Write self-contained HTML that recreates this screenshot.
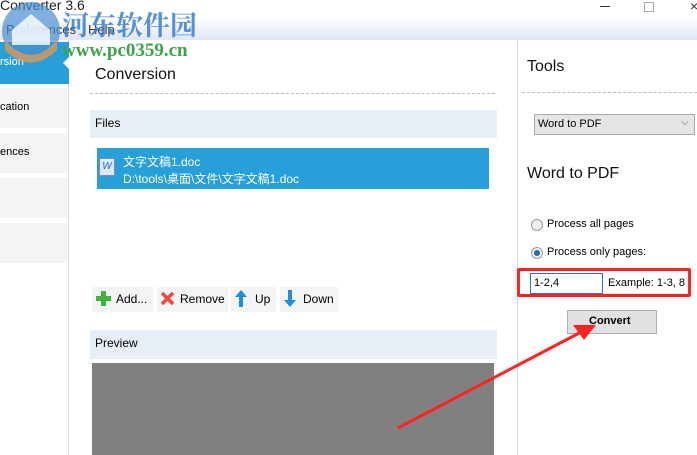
<!DOCTYPE html>
<html><head><meta charset="utf-8"><style>
*{margin:0;padding:0;box-sizing:border-box}
body{width:697px;height:455px;overflow:hidden;background:#fff;font-family:"Liberation Sans","Noto Sans CJK SC",sans-serif;font-size:12px;color:#000;position:relative}
.a{position:absolute}
.r{font-size:11px}
</style></head><body>
<div class="a" style="left:0;top:0;width:697px;height:20px;background:#fff"></div>
<div class="a" style="left:0;top:-3px;font-size:14px;color:#222">Converter 3.6</div>
<div class="a" style="left:600px;top:6px;width:10px;height:1px;background:#333"></div>
<div class="a" style="left:644px;top:2px;width:10px;height:10px;border:1px solid #aaa"></div>
<div class="a" style="left:690px;top:-2px;font-size:14px;color:#333">×</div>
<div class="a" style="left:0;top:20px;width:697px;height:20px;background:linear-gradient(#fbfcff,#dfe6f3)"></div>
<div class="a" style="left:6px;top:22px;font-size:13px;color:#333">Preferences</div>
<div class="a" style="left:88px;top:22px;font-size:13px;color:#333">Help</div>
<!-- sidebar -->
<div class="a" style="left:0;top:40px;width:69px;height:415px;background:#fff;border-right:1px solid #ddd"></div>
<div class="a" style="left:0;top:42px;width:69px;height:42px;background:#279fd9"></div>
<div class="a" style="left:0;top:56px;color:#fff;font-size:11px">rsion</div>
<div class="a" style="left:63px;top:57px;width:0;height:0;border-top:6px solid transparent;border-bottom:6px solid transparent;border-right:6px solid #fff"></div>
<div class="a" style="left:0;top:88px;width:68px;height:40px;background:#f3f4f6"></div>
<div class="a" style="left:0;top:101px;font-size:11px">cation</div>
<div class="a" style="left:0;top:133px;width:68px;height:40px;background:#f3f4f6"></div>
<div class="a" style="left:0;top:146px;font-size:11px">ences</div>
<div class="a" style="left:0;top:178px;width:68px;height:40px;background:#f3f4f6"></div>
<div class="a" style="left:0;top:223px;width:68px;height:40px;background:#f3f4f6"></div>
<!-- main -->
<div class="a" style="left:95px;top:66px;font-size:16px;color:#111">Conversion</div>
<div class="a" style="left:90px;top:93px;width:405px;border-top:1px dashed #bbb"></div>
<div class="a" style="left:90px;top:110px;width:407px;height:28px;background:#e8eef6"></div>
<div class="a" style="left:95px;top:116px;font-size:12px">Files</div>
<div class="a" style="left:97px;top:148px;width:392px;height:41px;background:#279fd9"></div>
<div class="a" style="left:99px;top:158px;width:16px;height:18px;background:#dce8f8;border:1px solid #88a;font-size:10px;color:#36c;font-style:italic;text-align:center;line-height:16px">W</div>
<div class="a" style="left:123px;top:153px;color:#fff;font-size:12px">文字文稿1.doc</div>
<div class="a" style="left:123px;top:170px;color:#fff;font-size:12px">D:\tools\桌面\文件\文字文稿1.doc</div>
<!-- buttons -->
<div class="a" style="left:92px;top:287px;width:61px;height:25px;background:#f3f4f6"></div>
<svg class="a" style="left:96px;top:291px" width="15" height="15"><path d="M5 0h5v5h5v5h-5v5h-5v-5h-5v-5h5z" fill="#3bb53b"/></svg>
<div class="a" style="left:116px;top:292px" class="r">Add...</div>
<div class="a" style="left:157px;top:287px;width:71px;height:25px;background:#f3f4f6"></div>
<svg class="a" style="left:160px;top:291px" width="15" height="15"><path d="M2 2L13 13M13 2L2 13" stroke="#ec4a3a" stroke-width="3.5"/></svg>
<div class="a" style="left:180px;top:292px">Remove</div>
<div class="a" style="left:231px;top:287px;width:45px;height:25px;background:#f3f4f6"></div>
<svg class="a" style="left:235px;top:290px" width="12" height="17"><path d="M6 0L12 7H8V17H4V7H0z" fill="#1e8ee0"/></svg>
<div class="a" style="left:255px;top:292px">Up</div>
<div class="a" style="left:280px;top:287px;width:59px;height:25px;background:#f3f4f6"></div>
<svg class="a" style="left:284px;top:290px" width="12" height="17"><path d="M6 17L12 10H8V0H4V10H0z" fill="#1e8ee0"/></svg>
<div class="a" style="left:303px;top:292px">Down</div>
<div class="a" style="left:90px;top:330px;width:407px;height:29px;background:#e8eef6"></div>
<div class="a" style="left:95px;top:336px;font-size:12px">Preview</div>
<div class="a" style="left:92px;top:363px;width:402px;height:92px;background:#808080"></div>
<!-- right -->
<div class="a" style="left:517px;top:40px;width:1px;height:415px;background:#ddd"></div>
<div class="a" style="left:527px;top:58px;font-size:16px;color:#111">Tools</div>
<div class="a" style="left:522px;top:92px;width:175px;border-top:1px dashed #bbb"></div>
<div class="a" style="left:534px;top:114px;width:161px;height:21px;background:#e5e5e5;border:1px solid #aaa"></div>
<div class="a r" style="left:538px;top:118px">Word to PDF</div>
<div class="a" style="left:681px;top:117px;font-size:10px;color:#555">⌵</div>
<div class="a" style="left:527px;top:165px;font-size:16px;color:#111">Word to PDF</div>
<div class="a" style="left:531px;top:219px;width:12px;height:12px;border-radius:50%;border:1px solid #999;background:#eee"></div>
<div class="a r" style="left:547px;top:218px">Process all pages</div>
<div class="a" style="left:531px;top:247px;width:12px;height:12px;border-radius:50%;border:1px solid #999;background:#eee"></div>
<div class="a" style="left:534px;top:250px;width:6px;height:6px;border-radius:50%;background:#1a6fb3"></div>
<div class="a r" style="left:547px;top:246px">Process only pages:</div>
<div class="a" style="left:517px;top:268px;width:174px;height:29px;border:3px solid #f22;border-radius:2px"></div>
<div class="a" style="left:530px;top:273px;width:73px;height:21px;border:1px solid #1e7bd0;background:#fff"></div>
<div class="a r" style="left:534px;top:277px">1-2,4</div>
<div class="a r" style="left:608px;top:277px">Example: 1-3, 8</div>
<div class="a" style="left:567px;top:310px;width:90px;height:24px;background:#e1e1e1;border:1px solid #adadad"></div>
<div class="a" style="left:589px;top:315px;font-size:11px;font-weight:bold">Convert</div>
<svg class="a" style="left:0;top:0" width="697" height="455"><line x1="398" y1="428" x2="585" y2="330" stroke="#f22" stroke-width="3"/><polygon points="596,325 573,325 584,340" fill="#f22"/></svg>
<!-- watermark -->
<svg class="a" style="left:0;top:0" width="70" height="70"><circle cx="31" cy="31" r="29" fill="#4a8fcf" opacity=".7"/><path d="M5 40 Q31 70 57 40 L57 50 Q31 75 5 50Z" fill="#e89a4a" opacity=".75"/><path d="M12 30 L31 14 L50 30 L50 45 L12 45Z" fill="#fff" opacity=".8"/></svg>
<div class="a" style="left:62px;top:4px;font-size:27px;font-weight:bold;color:#3a7fd0;opacity:.85;font-family:'Noto Serif CJK SC',serif">河东软件园</div>
<div class="a" style="left:62px;top:40px;font-size:19px;font-weight:bold;color:#3aa54a;font-family:'Liberation Serif',serif">www.pc0359.cn</div>
</body></html>
